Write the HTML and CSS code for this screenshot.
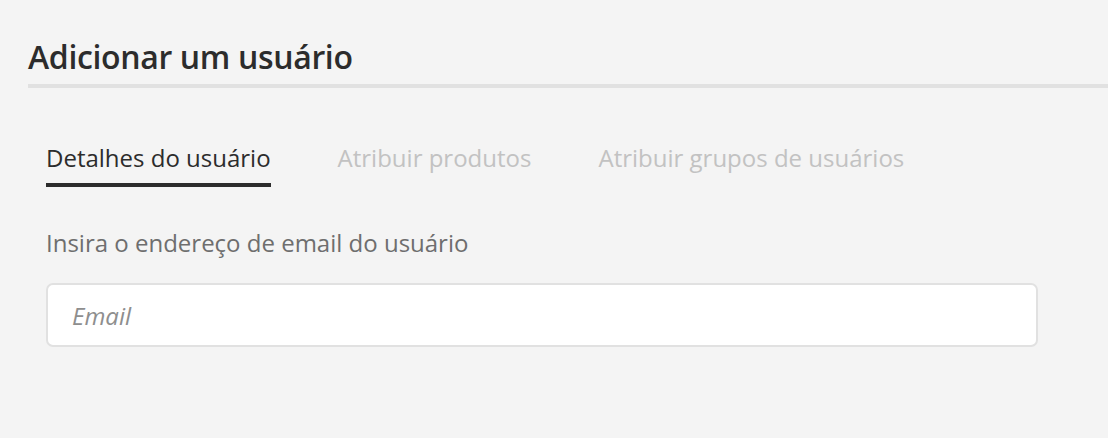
FILE: index.html
```html
<!DOCTYPE html>
<html lang="pt-BR">
<head>
<meta charset="utf-8">
<title>Adicionar um usuário</title>
<link rel="stylesheet" href="styles.css">
</head>
<body>
<div class="page">
  <header class="header">
    <h1 class="title">Adicionar um usuário</h1>
  </header>
  <div class="content">
    <nav class="tabs">
      <div class="tab tab-active">Detalhes do usuário</div>
      <div class="tab">Atribuir produtos</div>
      <div class="tab">Atribuir grupos de usuários</div>
    </nav>
    <label class="label" for="email">Insira o endereço de email do usuário</label>
    <input class="input" id="email" type="text" placeholder="Email">
  </div>
</div>
</body>
</html>
```

FILE: styles.css
```css
html, body {
  margin: 0;
  padding: 0;
  background: #f4f4f4;
}
body {
  font-family: "Open Sans", "Noto Sans", sans-serif;
  color: #2c2c2c;
  width: 1108px;
  height: 438px;
  overflow: hidden;
}
.page {
  padding-left: 28px;
}
.header {
  border-bottom: 4px solid #e1e1e1;
  padding-top: 35px;
  padding-bottom: 5px;
}
.title {
  margin: 0;
  font-size: 32px;
  font-weight: 600;
  line-height: 44px;
  letter-spacing: -0.35px;
}
.content {
  padding-left: 18px;
  width: 992px;
}
.tabs {
  display: flex;
  gap: 67px;
  margin-top: 54px;
}
.tab {
  font-size: 24px;
  line-height: 32px;
  color: #c2c2c2;
  padding-bottom: 9px;
  border-bottom: 4px solid transparent;
}
.tab-active {
  color: #2c2c2c;
  border-bottom-color: #2c2c2c;
}
.label {
  display: block;
  margin-top: 40px;
  font-size: 24px;
  line-height: 32px;
  color: #6e6e6e;
}
.input {
  display: block;
  box-sizing: border-box;
  margin-top: 24px;
  width: 992px;
  height: 64px;
  border: 2px solid #e1e1e1;
  border-radius: 7px;
  background: #fff;
  padding: 0 24px;
  font-family: "Open Sans", "Noto Sans", sans-serif;
  font-size: 24px;
  outline: none;
}
.input::placeholder {
  font-style: italic;
  color: #8e8e8e;
}
```
